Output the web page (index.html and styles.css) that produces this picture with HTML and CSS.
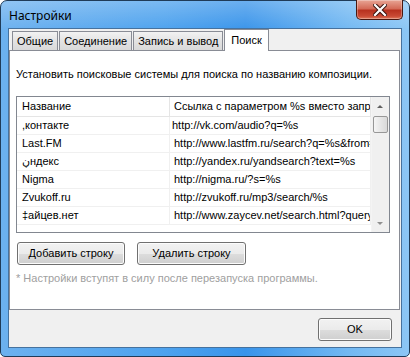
FILE: index.html
```html
<html lang="ru">
  <head>
    <meta charset="UTF-8" />
    <title>Настройки</title>
    <link rel="stylesheet" href="styles.css">
  </head>
  <body>
    <div class="window">
      <div class="titlebar">
        <span class="title">Настройки</span>
        <span class="close">
          <svg width="14" height="12" viewBox="0 0 14 12">
            <path d="M2 1 L12 11 M12 1 L2 11" stroke="#3a1410" stroke-width="4.2" stroke-linecap="square" fill="none" />
            <path d="M2 1 L12 11 M12 1 L2 11" stroke="#ffffff" stroke-width="2.2" stroke-linecap="square" fill="none" />
          </svg>
        </span>
      </div>
      <div class="client">
        <div class="tabs">
          <span class="tab">Общие</span>
          <span class="tab">Соединение</span>
          <span class="tab">Запись и вывод</span>
          <span class="tab active">Поиск</span>
        </div>
        <div class="panel">
          <div class="desc">Установить поисковые системы для поиска по названию композиции.</div>
          <div class="grid">
            <table class="list">
              <tr class="head">
                <th class="c1">Название</th>
                <th class="c2">Ссылка с параметром %s вместо запроса</th>
              </tr>
              <tr><td class="c1">,контакте</td><td class="c2 first">http://vk.com/audio?q=%s</td></tr>
              <tr><td class="c1">Last.FM</td><td class="c2">http://www.lastfm.ru/search?q=%s&amp;from=ac</td></tr>
              <tr><td class="c1">ڹндекс</td><td class="c2">http://yandex.ru/yandsearch?text=%s</td></tr>
              <tr><td class="c1">Nigma</td><td class="c2">http://nigma.ru/?s=%s</td></tr>
              <tr><td class="c1">Zvukoff.ru</td><td class="c2">http://zvukoff.ru/mp3/search/%s</td></tr>
              <tr><td class="c1">‡айцев.нет</td><td class="c2">http://www.zaycev.net/search.html?query_search=%s</td></tr>
            </table>
            <div class="scrollbar">
              <div class="arrow up"></div>
              <div class="thumb"></div>
              <div class="track"></div>
              <div class="arrow down"></div>
            </div>
          </div>
          <div class="buttons">
            <span class="button add">Добавить строку</span>
            <span class="button del">Удалить строку</span>
          </div>
          <div class="note">* Настройки вступят в силу после перезапуска программы.</div>
        </div>
        <div class="footer">
          <span class="button ok">OK</span>
        </div>
      </div>
    </div>
  </body>
</html>
```

FILE: styles.css
```css
body {
  margin: 0;
  font-family: "Liberation Sans", Arial, sans-serif;
  font-size: 11px;
  color: #000;
}
.window {
  width: 410px;
  height: 357px;
  box-sizing: border-box;
  border: 1px solid #1f3b58;
  border-radius: 7px 7px 5px 5px;
  padding: 0 7px 8px 7px;
  display: flex;
  flex-direction: column;
  background: linear-gradient(to bottom, rgba(255,255,255,0.25), rgba(255,255,255,0) 30px),
    linear-gradient(to right, #6cb1ef, #4da2ee 40%, #3994ea 60%, #72b8f2 85%, #8cc6f5);
}
.titlebar {
  height: 27px;
  display: flex;
  align-items: flex-start;
  position: relative;
}
.title {
  font-family: "Noto Sans", "Open Sans", sans-serif;
  font-size: 12px;
  margin: 6px 0 0 1px;
  color: #000;
}
.close {
  position: absolute;
  right: -1px;
  top: -1px;
  width: 45px;
  height: 19px;
  border: 1px solid #4a1810;
  border-top: none;
  border-radius: 0 0 5px 5px;
  background: linear-gradient(to bottom, #e8a595, #d46b58 45%, #b8321f 55%, #c94a34 85%, #e07a5c);
  box-shadow: inset 0 0 0 1px rgba(255,255,255,0.3);
  display: flex;
  align-items: center;
  justify-content: center;
}
.client {
  flex: 1;
  background: #f0f0f0;
  border: 1px solid #46729e;
  display: flex;
  flex-direction: column;
}
.tabs {
  height: 21px;
  display: flex;
  align-items: flex-end;
  padding-left: 3px;
  position: relative;
  z-index: 1;
}
.tab {
  height: 18px;
  line-height: 18px;
  padding: 0 4px;
  margin-right: 1px;
  border: 1px solid #898c95;
  border-bottom: none;
  background: linear-gradient(to bottom, #f2f2f2, #e3e3e3 50%, #d9d9d9);
  white-space: nowrap;
}
.tab.active {
  height: 21px;
  line-height: 20px;
  padding: 0 6px;
  background: #fff;
  margin-bottom: -1px;
}
.panel {
  height: 258px;
  margin-right: 1px;
  border: 1px solid #898c95;
  background: #fff;
  padding: 0 0 0 6px;
}
.desc {
  line-height: 13px;
  padding-top: 17px;
  margin-bottom: 15px;
}
.grid {
  width: 372px;
  height: 135px;
  border: 1px solid #828790;
  display: flex;
  overflow: hidden;
}
.list {
  width: 355px;
  border-collapse: collapse;
  table-layout: fixed;
  font-size: inherit;
  align-self: flex-start;
}
.list th,
.list td {
  height: 18px;
  padding: 0 0 0 5px;
  text-align: left;
  font-weight: normal;
  white-space: nowrap;
  overflow: hidden;
  border-bottom: 1px solid #f0f0f0;
  border-right: 1px solid #f0f0f0;
}
.list th {
  height: 19px;
  border-bottom: 1px solid #e5e5e5;
  border-right: 1px solid #e5e5e5;
}
.list .c1 {
  width: 147px;
}
.list .c2 {
  padding-left: 4px;
}
.list .first {
  padding-left: 2px;
}
.scrollbar {
  width: 17px;
  display: flex;
  flex-direction: column;
  background: #f0f0f0;
  border-left: 1px solid #f4f4f4;
}
.arrow {
  height: 19px;
  position: relative;
}
.arrow::after {
  content: "";
  position: absolute;
  left: 5px;
  width: 0;
  height: 0;
  border-left: 3px solid transparent;
  border-right: 3px solid transparent;
}
.arrow.up::after {
  top: 8px;
  border-bottom: 3px solid #606060;
}
.arrow.down::after {
  top: 9px;
  border-top: 3px solid #909090;
}
.thumb {
  height: 15px;
  margin: 0 1px;
  border: 1px solid #979797;
  border-radius: 2px;
  background: linear-gradient(to right, #f5f5f5, #e6e6e6 50%, #d9d9d9);
}
.track {
  flex: 1;
}
.buttons {
  display: flex;
  gap: 12px;
  margin: 9px 0 0 1px;
}
.button {
  height: 21px;
  line-height: 21px;
  box-sizing: content-box;
  border: 1px solid #707070;
  border-radius: 3px;
  background: linear-gradient(to bottom, #f2f2f2, #ebebeb 50%, #dddddd 51%, #cfcfcf);
  box-shadow: inset 0 0 0 1px #fcfcfc;
  text-align: center;
}
.add {
  width: 106px;
}
.del {
  width: 107px;
}
.note {
  color: #a0a0a0;
  line-height: 13px;
  margin-top: 7px;
}
.footer {
  display: flex;
  justify-content: flex-end;
  padding: 8px 9px 0 0;
}
.ok {
  width: 72px;
}
```
